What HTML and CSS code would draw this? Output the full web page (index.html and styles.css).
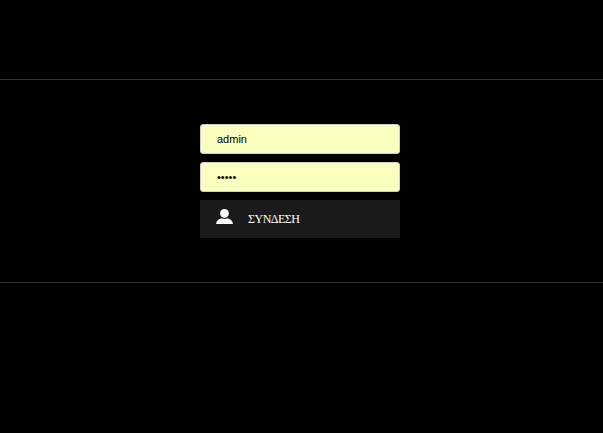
FILE: index.html
```html
<!DOCTYPE html>
<html lang="el">
<head>
    <meta charset="UTF-8">
    <meta name="viewport" content="width=device-width, initial-scale=1.0">
    <title>Σύνδεση</title>
    <link rel="stylesheet" href="styles.css">
</head>
<body>

    <div class="login-band">
        <form class="login-form">
            <input class="field" type="text" value="admin">
            <input class="field" type="password" value="admin">
            <button class="login-btn" type="button">
                <svg class="user-icon" viewBox="0 0 17 16" width="17" height="16">
                    <ellipse cx="8.5" cy="4.4" rx="4.4" ry="4.4" fill="#fff"/>
                    <path d="M0 15 C0.4 11.6 3 9.8 5.4 9.2 C6.8 10 10.2 10 11.6 9.2 C14 9.8 16.6 11.6 17 15 Z" fill="#fff"/>
                </svg>
                <span>ΣΥΝΔΕΣΗ</span>
            </button>
        </form>
    </div>

</body>
</html>
```

FILE: styles.css
```css
body {
    margin: 0;
    background-color: #000;
    padding-top: 79px;
    font-family: "Liberation Sans", sans-serif;
}

.login-band {
    height: 204px;
    padding-top: 44px;
    box-sizing: border-box;
    border-top: 1px solid #333;
    border-bottom: 1px solid #333;
}

.login-form {
    width: 200px;
    margin-left: 200px;
    display: flex;
    flex-direction: column;
    gap: 8px;
}

.field {
    box-sizing: border-box;
    width: 100%;
    height: 30px;
    padding: 0 16px;
    border: 1px solid #ccc;
    border-radius: 3px;
    background: #fbffbe;
    color: #000;
    font-family: "Liberation Sans", sans-serif;
    font-size: 11px;
    outline: none;
}

.login-btn {
    display: flex;
    align-items: center;
    gap: 15px;
    width: 100%;
    height: 38px;
    padding: 0 0 0 16px;
    border: none;
    background: #1a1a1a;
    color: #fff;
    font-family: "Liberation Serif", serif;
    font-size: 12px;
    letter-spacing: -0.5px;
    text-align: left;
}

.user-icon {
    flex: none;
    margin-top: -5px;
}
```
